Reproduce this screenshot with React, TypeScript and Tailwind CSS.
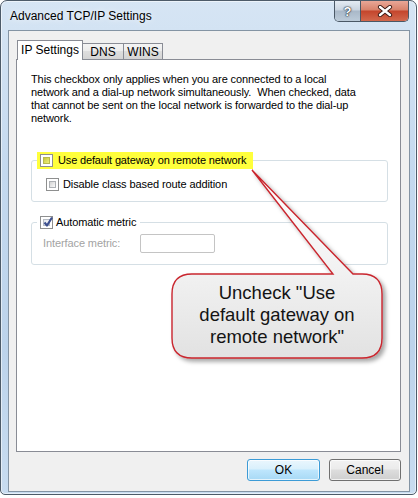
import React from "react";

function Box({ checked, tint }: { checked?: boolean; tint?: boolean }) {
  return (
    <span className="relative inline-flex h-[13px] w-[13px] shrink-0 border border-[#8e8f8f] bg-white p-[2px]">
      <span
        className={
          tint
            ? "block h-full w-full border border-[#b9b94e] bg-gradient-to-br from-[#c6c63c] to-[#f2f27a]"
            : checked
            ? "block h-full w-full border border-[#b7bcc4] bg-gradient-to-br from-[#e2e6ec] to-[#fbfbfc]"
            : "block h-full w-full border border-[#adb0b4] bg-gradient-to-br from-[#d3d3d3] to-[#fafafa]"
        }
      />
      {checked && (
        <svg className="absolute left-[1px] top-[-1px]" width="13" height="13" viewBox="0 0 13 13">
          <path d="M2.5 6.5 L5 9.5 L10 1.5" fill="none" stroke="#3c4f8e" strokeWidth="2.2" strokeLinejoin="round" />
        </svg>
      )}
    </span>
  );
}

export default function App() {
  return (
    <div className="relative h-[498px] w-[418px] overflow-hidden bg-white font-['Liberation_Sans',Arial,sans-serif] text-black">
      {/* window */}
      <div className="flex h-[495px] w-[417px] flex-col rounded-t-[7px] rounded-b-[5px] border border-[#4d5b69] bg-[linear-gradient(180deg,#d6e5f4_0%,#c4d9ef_35%,#bcd3eb_70%,#c8dcf0_100%)] shadow-[inset_0_0_0_1px_rgba(255,255,255,0.55)]">
        {/* title bar */}
        <div className="flex h-[29px] shrink-0 items-start justify-between">
          <div className="pl-[9px] pt-[8px] text-[12px] leading-[15px] [text-shadow:0_0_6px_#ffffff]">
            Advanced TCP/IP Settings
          </div>
          <div className="mr-[7px] flex h-[21px] overflow-hidden rounded-b-[5px] border border-t-0 border-[#4a5866]">
            <div className="flex w-[26px] items-center justify-center border-r border-[#4a5866] bg-[linear-gradient(180deg,#e4ebf3_0%,#c9d4e0_45%,#a9b8c8_50%,#bccbd9_100%)] text-[13px] font-bold leading-none text-white [text-shadow:0_0_1px_#27313b,0_0_1px_#27313b,0_0_2px_#27313b]">
              ?
            </div>
            <div className="flex w-[47px] items-center justify-center bg-[linear-gradient(180deg,#e9a797_0%,#d8826b_45%,#c4452c_50%,#d2684d_100%)]">
              <svg width="16" height="12" viewBox="0 0 16 12">
                <path d="M3 2 L13 10 M13 2 L3 10" stroke="#3b1a14" strokeWidth="4.2" strokeLinecap="round" />
                <path d="M3 2 L13 10 M13 2 L3 10" stroke="#ffffff" strokeWidth="2.4" strokeLinecap="round" />
              </svg>
            </div>
          </div>
        </div>

        {/* client area */}
        <div className="ml-[7px] flex h-[462px] w-[402px] flex-col border border-[#8494a4] bg-[#f0f0f0] pl-[7px] pr-[8px] pt-[9px] text-[11px]">
          {/* tabs */}
          <div className="flex h-[19px] items-end">
            <div className="relative z-10 mb-[-1px] ml-[1px] flex h-[20px] w-[66px] items-start justify-center border border-b-0 border-[#898c95] bg-white pt-[3px] text-[12px] leading-[13px]">
              IP Settings
            </div>
            <div className="flex h-[16px] w-[41px] items-center justify-center border border-b-0 border-l-0 border-[#898c95] bg-[linear-gradient(180deg,#f4f4f4_0%,#ececec_45%,#dedede_50%,#d4d4d4_100%)] pt-[1px] text-[12px]">
              DNS
            </div>
            <div className="flex h-[16px] w-[39px] items-center justify-center border border-b-0 border-l-0 border-[#898c95] bg-[linear-gradient(180deg,#f4f4f4_0%,#ececec_45%,#dedede_50%,#d4d4d4_100%)] pt-[1px] text-[12px]">
              WINS
            </div>
          </div>

          {/* panel */}
          <div className="flex h-[393px] w-[385px] flex-col border border-[#898c95] bg-white pt-[13px] tracking-[-0.1px]">
            <div className="whitespace-pre pl-[14px] leading-[13px]">
              <div>This checkbox only applies when you are connected to a local</div>
              <div>network and a dial-up network simultaneously.  When checked, data</div>
              <div>that cannot be sent on the local network is forwarded to the dial-up</div>
              <div>network.</div>
            </div>

            <fieldset className="ml-[14px] mr-[12px] mt-[27px] rounded-[3px] border border-[#d5dfe5] pb-[10px]">
              <legend className="ml-[5px] flex h-[17px] items-center bg-[#ffff3c] pl-[3px] pr-[7px]">
                <Box tint />
                <span className="ml-[5px] leading-[13px] tracking-[-0.15px]">Use default gateway on remote network</span>
              </legend>
              <div className="ml-[14px] mt-[9px] flex items-center">
                <Box />
                <span className="ml-[4px] leading-[13px]">Disable class based route addition</span>
              </div>
            </fieldset>

            <fieldset className="ml-[14px] mr-[12px] mt-[13px] rounded-[3px] border border-[#d5dfe5] pb-[11px]">
              <legend className="ml-[5px] flex h-[15px] items-center bg-white pl-[3px] pr-[4px]">
                <Box checked />
                <span className="ml-[3px] leading-[13px]">Automatic metric</span>
              </legend>
              <div className="ml-[11px] mt-[4px] flex items-center">
                <span className="w-[97px] leading-[13px] text-[#a3a3a3]">Interface metric:</span>
                <span className="h-[19px] w-[75px] rounded-[2px] border border-[#c4c4c4] bg-white" />
              </div>
            </fieldset>
          </div>

          {/* buttons */}
          <div className="mt-[7px] flex justify-end gap-[9px]">
            <button className="flex h-[22px] w-[73px] items-center justify-center rounded-[3px] border border-[#3c9bd6] bg-[linear-gradient(180deg,#eaf6fd_0%,#d9f0fc_45%,#bee6fd_50%,#a7d9f5_100%)] text-[12px] shadow-[inset_0_0_0_1px_rgba(255,255,255,0.7)]">
              OK
            </button>
            <button className="flex h-[22px] w-[72px] items-center justify-center rounded-[3px] border border-[#707070] bg-[linear-gradient(180deg,#f2f2f2_0%,#ebebeb_45%,#dddddd_50%,#cfcfcf_100%)] text-[12px] shadow-[inset_0_0_0_1px_rgba(255,255,255,0.7)]">
              Cancel
            </button>
          </div>
        </div>
      </div>

      {/* callout annotation */}
      <svg className="absolute left-[160px] top-[160px]" width="240" height="210" viewBox="0 0 240 210">
        <defs>
          <linearGradient id="cg" x1="0" y1="0" x2="0" y2="1">
            <stop offset="0" stopColor="#ffffff" />
            <stop offset="0.55" stopColor="#f1f1f1" />
            <stop offset="1" stopColor="#e2e2e2" />
          </linearGradient>
          <filter id="sh" x="-10%" y="-10%" width="130%" height="130%">
            <feDropShadow dx="3" dy="3" stdDeviation="2" floodColor="#000000" floodOpacity="0.35" />
          </filter>
        </defs>
        <path
          d="M32 114 L173 114 L92 10 L193 114 L202 114 Q222 114 222 134 L222 178 Q222 198 202 198 L32 198 Q12 198 12 178 L12 134 Q12 114 32 114 Z"
          fill="url(#cg)"
          stroke="#c9262e"
          strokeWidth="1.4"
          filter="url(#sh)"
        />
      </svg>
      <div className="absolute left-[172px] top-[282px] w-[210px] text-center text-[18.5px] leading-[22px] text-[#141414]">
        <div>Uncheck "Use</div>
        <div>default gateway on</div>
        <div>remote network"</div>
      </div>
    </div>
  );
}
